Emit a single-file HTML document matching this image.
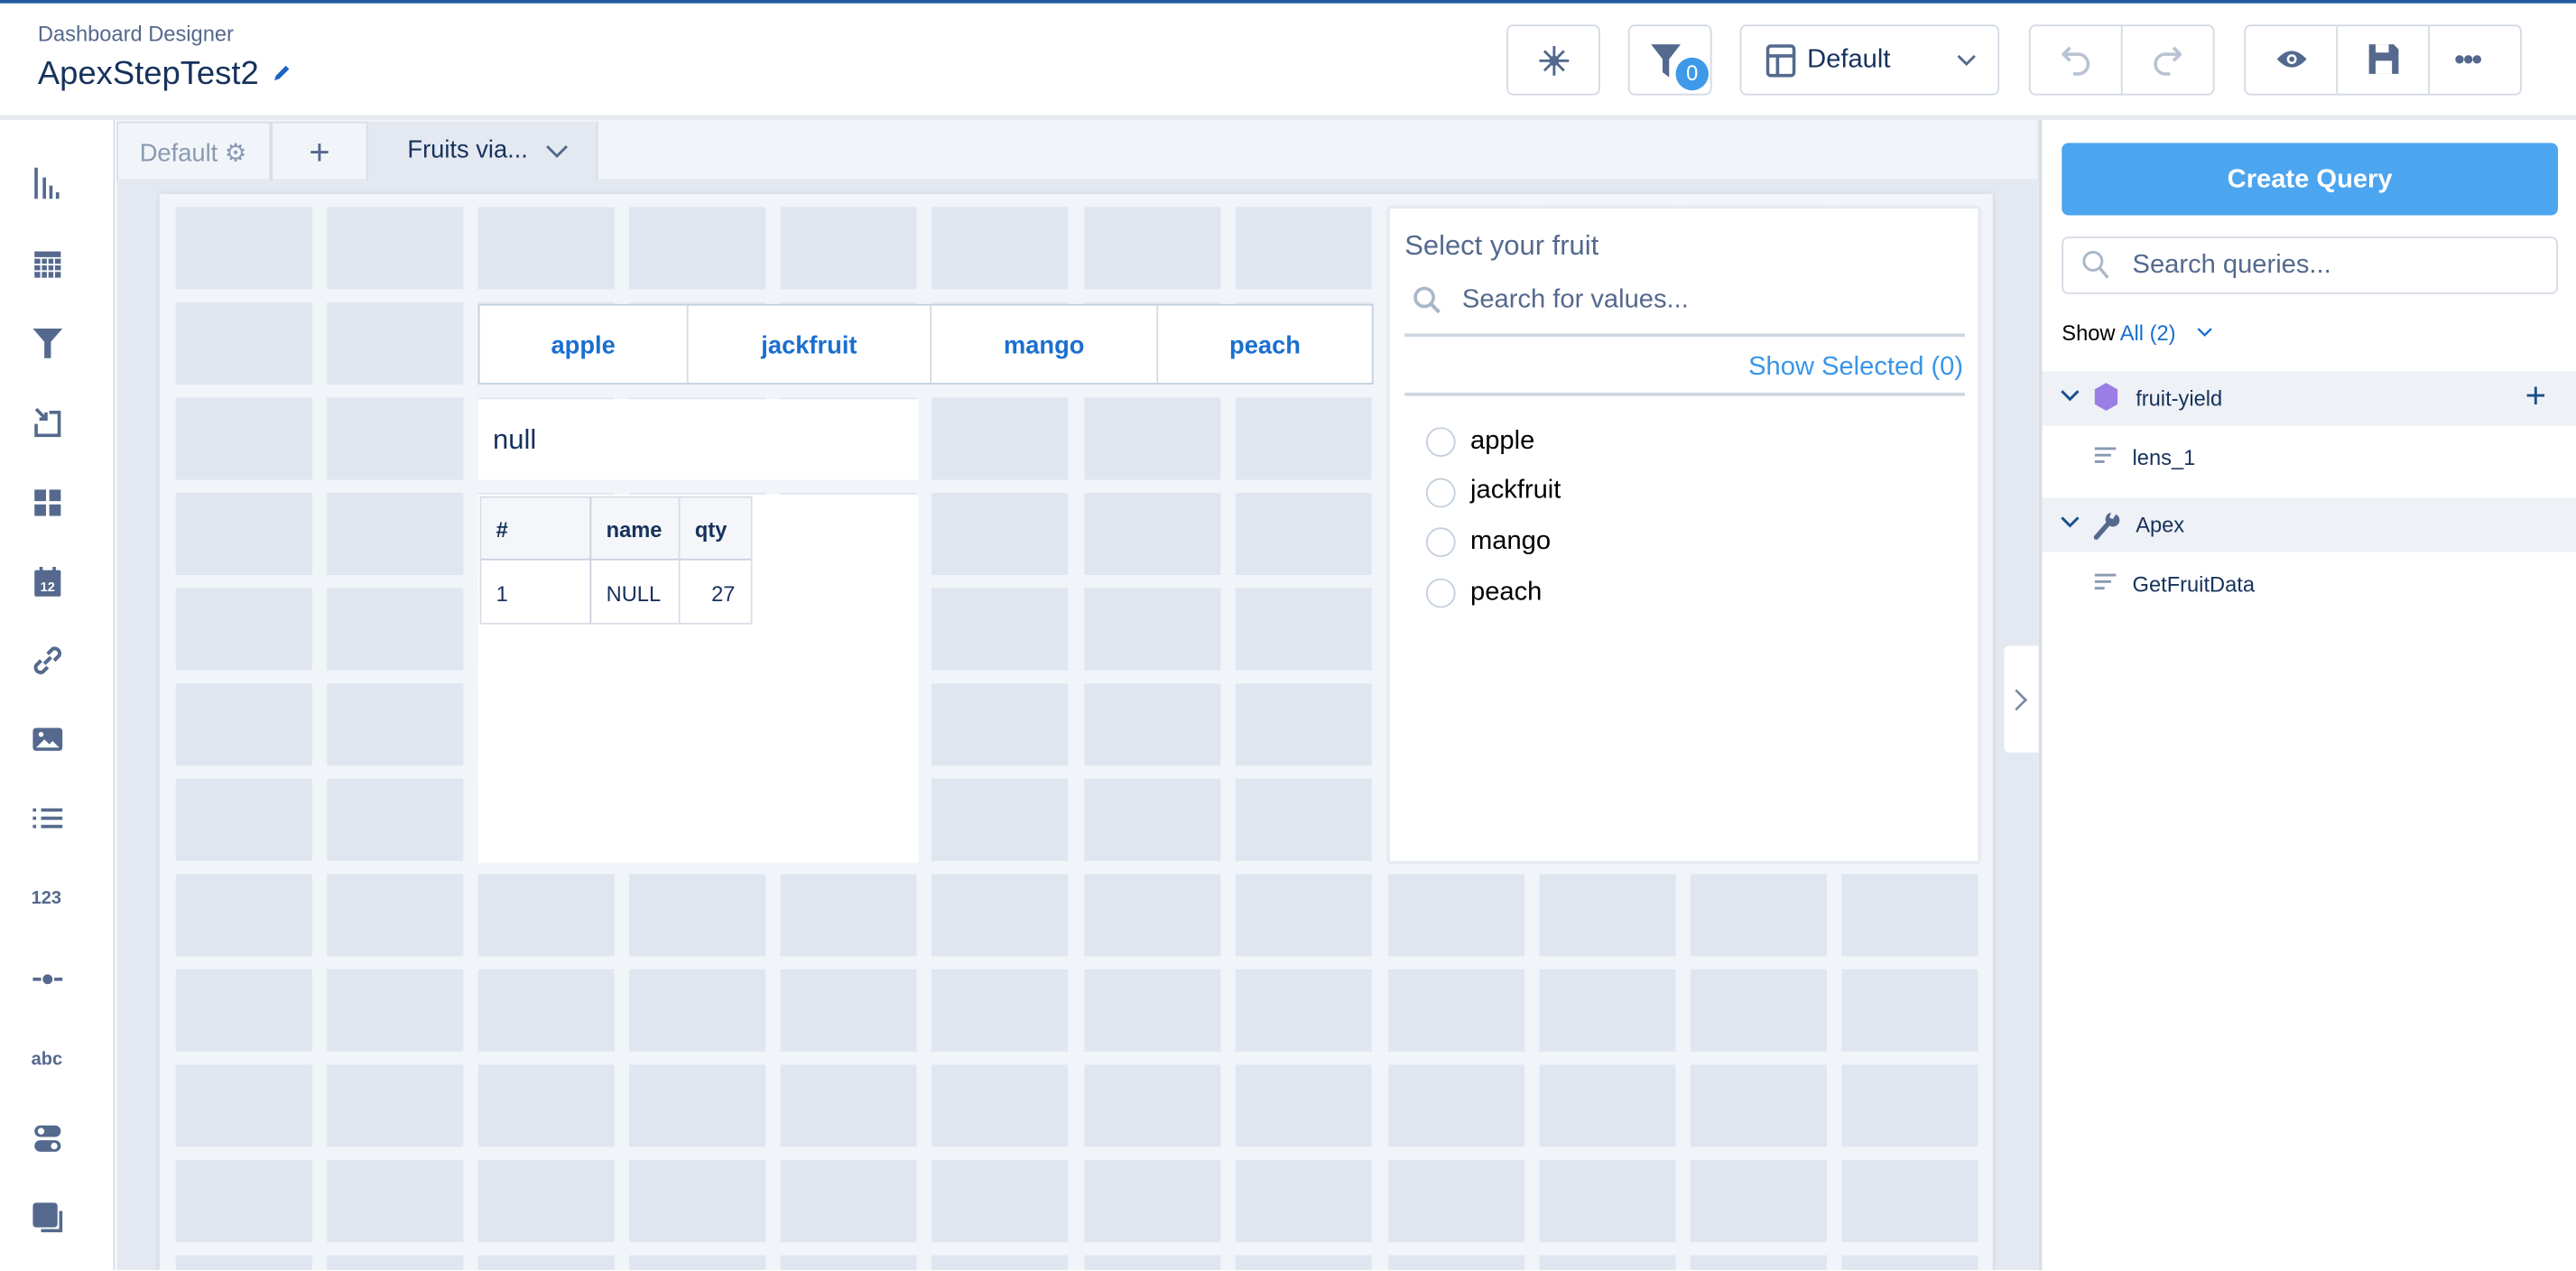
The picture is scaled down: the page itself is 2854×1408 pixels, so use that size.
<!DOCTYPE html>
<html><head><meta charset="utf-8"><style>
*{box-sizing:border-box;margin:0;padding:0}
html,body{width:2854px;height:1408px;overflow:hidden;background:#fff}
#w{position:absolute;left:0;top:0;width:1568px;height:773px;transform:scale(1.82015);transform-origin:0 0;font-family:"Liberation Sans",sans-serif;overflow:hidden}
.a{position:absolute}
.btn{position:absolute;top:15px;height:43px;border:1px solid #d4dae3;border-radius:4px;background:#fff}
.cell{position:absolute;width:83px;height:50px;background:#e0e6f0}
.ic{position:absolute;left:19px;width:20px;height:20px}
</style></head><body><div id="w">
<div class="a" style="left:0;top:0;width:1568px;height:2px;background:#1f5a9c"></div>
<div class="a" style="left:23px;top:13px;font-size:13px;color:#54698d">Dashboard Designer</div>
<div class="a" style="left:23px;top:34px;font-size:20px;color:#16325c">ApexStepTest2</div>
<svg class="a" style="left:165px;top:38px" width="13" height="13" viewBox="0 0 13 13"><path d="M2 11l1-3 6-6 2 2-6 6z" fill="#1b63c5"/></svg>
<div class="btn" style="left:917px;width:57px"><svg class="a" style="left:18px;top:11px" width="20" height="20" viewBox="0 0 20 20"><path d="M10 1v18M1 10h18M4 4l12 12M16 4L4 16" stroke="#54698d" stroke-width="1.6"/><circle cx="10" cy="10" r="3" fill="#54698d"/></svg></div>
<div class="btn" style="left:991px;width:51px"><svg class="a" style="left:12px;top:10px" width="20" height="22" viewBox="0 0 20 22"><path d="M1 1h18l-7 9v11l-4-3v-8z" fill="#54698d"/></svg><div class="a" style="left:28px;top:19px;width:20px;height:20px;border-radius:10px;background:#3e9ae8;color:#fff;font-size:13px;text-align:center;line-height:20px">0</div></div>
<div class="btn" style="left:1059px;width:158px"><svg class="a" style="left:15px;top:11px" width="18" height="20" viewBox="0 0 18 20"><rect x="1" y="1" width="16" height="18" rx="2" fill="none" stroke="#54698d" stroke-width="2"/><path d="M1 7h16M7 7v12" stroke="#54698d" stroke-width="2"/></svg><div class="a" style="left:40px;top:12px;font-size:16px;color:#16325c">Default</div><svg class="a" style="left:131px;top:17px" width="12" height="8" viewBox="0 0 12 8"><path d="M1 1l5 5 5-5" stroke="#54698d" stroke-width="1.6" fill="none"/></svg></div>
<div class="btn" style="left:1235px;width:113px"><div class="a" style="left:55px;top:0;width:1px;height:41px;background:#d4dae3"></div>
<svg class="a" style="left:19px;top:11px" width="18" height="20" viewBox="0 0 18 20"><path d="M5 2L1 6l4 4M1 6h9a6 6 0 010 12H7" stroke="#b8c3d3" stroke-width="2" fill="none"/></svg>
<svg class="a" style="left:74px;top:11px" width="18" height="20" viewBox="0 0 18 20"><path d="M13 2l4 4-4 4M17 6H8a6 6 0 000 12h3" stroke="#b8c3d3" stroke-width="2" fill="none"/></svg></div>
<div class="btn" style="left:1366px;width:169px"><div class="a" style="left:55px;top:0;width:1px;height:41px;background:#d4dae3"></div><div class="a" style="left:111px;top:0;width:1px;height:41px;background:#d4dae3"></div>
<svg class="a" style="left:18px;top:12px" width="20" height="16" viewBox="0 0 20 16"><path d="M1 8q9-10 18 0q-9 10-18 0z" fill="#54698d"/><circle cx="10" cy="8" r="3" fill="#fff"/><circle cx="10" cy="8" r="1.6" fill="#54698d"/></svg>
<svg class="a" style="left:74px;top:10px" width="20" height="20" viewBox="0 0 20 20"><path d="M1 1h15l3 3v15H1z" fill="#54698d"/><rect x="5" y="1" width="8" height="5" fill="#fff"/><rect x="5" y="11" width="10" height="8" fill="#fff"/></svg>
<div class="a" style="left:127px;top:10px;font-size:18px;font-weight:bold;color:#54698d;letter-spacing:-1px">•••</div></div>
<div class="a" style="left:0;top:70px;width:1568px;height:3px;background:#e6eaf0"></div>
<div class="a" style="left:0;top:73px;width:70px;height:701px;background:#fff;border-right:1px solid #d4dae3"></div>
<svg class="ic" style="top:102px" viewBox="0 0 20 20"><path d="M3 0v19M8 6v13M12 11v8M16 15v4" stroke="#54698d" stroke-width="2"/></svg>
<svg class="ic" style="top:151px" viewBox="0 0 20 20"><path d="M2 2h16v16H2z" fill="#54698d"/><path d="M2 6h16M2 10h16M2 14h16M6 6v12M10 6v12M14 6v12" stroke="#fff" stroke-width="1"/></svg>
<svg class="ic" style="top:199px" viewBox="0 0 20 20"><path d="M1 1h18l-7 8v10h-4v-10z" fill="#54698d"/></svg>
<svg class="ic" style="top:247px" viewBox="0 0 20 20"><path d="M3 2l6 6M9 4v4H5" stroke="#54698d" stroke-width="2" fill="none"/><path d="M11 4h6v14H3v-7" stroke="#54698d" stroke-width="2" fill="none"/></svg>
<svg class="ic" style="top:296px" viewBox="0 0 20 20"><rect x="2" y="2" width="7" height="7" fill="#54698d"/><rect x="11" y="2" width="7" height="7" fill="#54698d"/><rect x="2" y="11" width="7" height="7" fill="#54698d"/><rect x="11" y="11" width="7" height="7" fill="#54698d"/></svg>
<svg class="ic" style="top:344px" viewBox="0 0 20 20"><rect x="2" y="3" width="16" height="16" rx="1" fill="#54698d"/><path d="M6 1v4M14 1v4" stroke="#54698d" stroke-width="2"/><text x="10" y="16" font-size="8" fill="#fff" text-anchor="middle" font-family="Liberation Sans" font-weight="bold">12</text></svg>
<svg class="ic" style="top:392px" viewBox="0 0 20 20"><path d="M8 12l4-4M6 10l-3 3a3 3 0 004 4l3-3M14 10l3-3a3 3 0 00-4-4l-3 3" stroke="#54698d" stroke-width="2.2" fill="none"/></svg>
<svg class="ic" style="top:440px" viewBox="0 0 20 20"><rect x="1" y="3" width="18" height="14" rx="2" fill="#54698d"/><circle cx="6" cy="7" r="1.5" fill="#fff"/><path d="M3 15l5-5 3 3 2-2 4 4z" fill="#fff"/></svg>
<svg class="ic" style="top:488px" viewBox="0 0 20 20"><path d="M1 5h2M6 5h13M1 10h2M6 10h13M1 15h2M6 15h13" stroke="#54698d" stroke-width="2"/></svg>
<div class="a" style="left:19px;top:541px;font-size:11px;font-weight:bold;color:#54698d">123</div>
<svg class="ic" style="top:586px" viewBox="0 0 20 20"><path d="M1 10h5M14 10h5" stroke="#54698d" stroke-width="2"/><circle cx="10" cy="10" r="3" fill="#54698d"/></svg>
<div class="a" style="left:19px;top:639px;font-size:11px;font-weight:bold;color:#54698d">abc</div>
<svg class="ic" style="top:683px" viewBox="0 0 20 20"><rect x="2" y="2" width="16" height="7" rx="3.5" fill="#54698d"/><rect x="2" y="11" width="16" height="7" rx="3.5" fill="#54698d"/><circle cx="6" cy="5.5" r="2" fill="#fff"/><circle cx="14" cy="14.5" r="2" fill="#fff"/></svg>
<svg class="ic" style="top:731px" viewBox="0 0 20 20"><rect x="1" y="1" width="15" height="15" rx="2" fill="#54698d"/><path d="M18 6v12H6" stroke="#54698d" stroke-width="2" fill="none"/></svg>
<div class="a" style="left:71px;top:73px;width:1170px;height:701px;background:#e4e9f1"></div>
<div class="a" style="left:71px;top:73px;width:1169px;height:37px;background:#f1f4f9;border-bottom:1px solid #e4e9f1"></div>
<div class="a" style="left:71px;top:74px;width:94px;height:36px;border:1px solid #d8dee7;border-bottom:none;font-size:15px;color:#8a9ab2;padding:9px 0 0 13px">Default ⚙</div>
<div class="a" style="left:165px;top:74px;width:59px;height:36px;border:1px solid #d8dee7;border-bottom:none;font-size:22px;color:#54698d;text-align:center;line-height:35px">+</div>
<div class="a" style="left:224px;top:74px;width:140px;height:36px;background:#e4e9f1;border-right:1px solid #d8dee7;font-size:15px;color:#16325c;padding:9px 0 0 24px">Fruits via...</div>
<svg class="a" style="left:332px;top:88px" width="14" height="9" viewBox="0 0 14 9"><path d="M1 1l6 6 6-6" stroke="#54698d" stroke-width="1.6" fill="none"/></svg>
<div class="a" style="left:97px;top:118px;width:1116px;height:656px;background:#f1f4f9;box-shadow:0 0 3px rgba(0,0,0,.12)"></div>
<div id="cells"></div>
<script>
var h='';var xs=[107,199,291,383,475,567,660,752,845,937,1029,1121];
for(var r=0;r<12;r++)for(var c=0;c<12;c++){var y=126+r*58;var hh=Math.min(50,773-y);if(hh>0)h+='<div class="cell" style="left:'+xs[c]+'px;top:'+y+'px;height:'+hh+'px"></div>';}
document.getElementById('cells').innerHTML=h;
</script>
<div class="a" style="left:291px;top:185px;width:545px;height:49px;background:#fff;border:1px solid #c3cfde;display:flex;font-size:15px;font-weight:bold;color:#1a6fd0">
<div style="width:127px;text-align:center;line-height:49px;border-right:1px solid #d4dae3">apple</div>
<div style="width:148px;text-align:center;line-height:49px;border-right:1px solid #d4dae3">jackfruit</div>
<div style="width:138px;text-align:center;line-height:49px;border-right:1px solid #d4dae3">mango</div>
<div style="flex:1;text-align:center;line-height:49px">peach</div></div>
<div class="a" style="left:291px;top:243px;width:268px;height:49px;background:#fff;font-size:17px;color:#16325c;padding:15px 0 0 9px">null</div>
<div class="a" style="left:291px;top:301px;width:268px;height:224px;background:#fff"></div>
<div class="a" style="left:292px;top:302px;width:166px;height:78px;border:1px solid #d8dde6;font-size:13px;color:#16325c">
<div class="a" style="left:0;top:0;width:164px;height:38px;background:#f4f6f9;border-bottom:1px solid #c9d1dc"></div>
<div class="a" style="left:66px;top:0;width:1px;height:76px;background:#c9d1dc"></div>
<div class="a" style="left:120px;top:0;width:1px;height:76px;background:#d8dde6"></div>
<div class="a" style="left:9px;top:12px;font-weight:bold">#</div><div class="a" style="left:76px;top:12px;font-weight:bold">name</div><div class="a" style="left:130px;top:12px;font-weight:bold">qty</div>
<div class="a" style="left:9px;top:51px">1</div><div class="a" style="left:76px;top:51px">NULL</div><div class="a" style="left:140px;top:51px">27</div></div>
<div class="a" style="left:845px;top:126px;width:360px;height:399px;background:#fff;border:1px solid #e4e9f1;box-shadow:0 0 2px rgba(0,0,0,.1)">
<div class="a" style="left:9px;top:13px;font-size:17px;color:#54698d">Select your fruit</div>
<svg class="a" style="left:14px;top:47px" width="18" height="18" viewBox="0 0 18 18"><circle cx="7" cy="7" r="5.5" stroke="#a8b7c7" stroke-width="2" fill="none"/><path d="M11 11l5 5" stroke="#a8b7c7" stroke-width="2.2"/></svg>
<div class="a" style="left:44px;top:47px;font-size:16px;color:#54698d">Search for values...</div>
<div class="a" style="left:9px;top:76px;width:341px;height:2px;background:#cbd6e2"></div>
<div class="a" style="right:9px;top:88px;font-size:16px;color:#3a95e8">Show Selected (0)</div>
<div class="a" style="left:9px;top:112px;width:341px;height:2px;background:#cbd6e2"></div>
<div class="a" style="left:22px;top:133px;width:18px;height:18px;border:1.5px solid #c3cfdc;border-radius:50%"></div><div class="a" style="left:49px;top:133px;font-size:16px;color:#000">apple</div>
<div class="a" style="left:22px;top:164px;width:18px;height:18px;border:1.5px solid #c3cfdc;border-radius:50%"></div><div class="a" style="left:49px;top:163px;font-size:16px;color:#000">jackfruit</div>
<div class="a" style="left:22px;top:194px;width:18px;height:18px;border:1.5px solid #c3cfdc;border-radius:50%"></div><div class="a" style="left:49px;top:194px;font-size:16px;color:#000">mango</div>
<div class="a" style="left:22px;top:225px;width:18px;height:18px;border:1.5px solid #c3cfdc;border-radius:50%"></div><div class="a" style="left:49px;top:225px;font-size:16px;color:#000">peach</div></div>
<div class="a" style="left:1220px;top:393px;width:21px;height:65px;background:#fff;border-radius:3px 0 0 3px"></div>
<svg class="a" style="left:1226px;top:419px" width="8" height="14" viewBox="0 0 8 14"><path d="M1 1l6 6-6 6" stroke="#7a8ba6" stroke-width="1.5" fill="none"/></svg>
<div class="a" style="left:1241px;top:73px;width:327px;height:701px;background:#fff;border-left:2px solid #d8dee7"></div>
<div class="a" style="left:1255px;top:87px;width:302px;height:44px;background:#4ca5ef;border-radius:4px;color:#fff;font-size:16px;font-weight:bold;text-align:center;line-height:45px">Create Query</div>
<div class="a" style="left:1255px;top:144px;width:302px;height:35px;border:1px solid #d4dae3;border-radius:4px"></div>
<svg class="a" style="left:1267px;top:152px" width="18" height="19" viewBox="0 0 18 19"><circle cx="7" cy="7" r="5.5" stroke="#a8b7c7" stroke-width="1.6" fill="none"/><path d="M11 11l5 6" stroke="#a8b7c7" stroke-width="1.8"/></svg>
<div class="a" style="left:1298px;top:153px;font-size:16px;color:#54698d">Search queries...</div>
<div class="a" style="left:1255px;top:195px;font-size:13px;color:#000">Show <span style="color:#1a6fd0">All (2)</span></div>
<svg class="a" style="left:1337px;top:199px" width="10" height="7" viewBox="0 0 10 7"><path d="M1 1l4 4 4-4" stroke="#1a6fd0" stroke-width="1.3" fill="none"/></svg>
<div class="a" style="left:1243px;top:226px;width:325px;height:33px;background:#eef1f6"></div>
<svg class="a" style="left:1254px;top:237px" width="12" height="8" viewBox="0 0 12 8"><path d="M1 1l5 5 5-5" stroke="#1b4f8a" stroke-width="1.6" fill="none"/></svg>
<svg class="a" style="left:1275px;top:233px" width="14" height="17" viewBox="0 0 14 17"><path d="M7 0l7 4v9l-7 4-7-4V4z" fill="#9a7ee6"/></svg>
<div class="a" style="left:1300px;top:235px;font-size:13px;color:#16325c">fruit-yield</div>
<div class="a" style="left:1537px;top:228px;font-size:22px;color:#1b4f8a">+</div>
<svg class="a" style="left:1275px;top:272px" width="14" height="12" viewBox="0 0 14 12"><path d="M0 1h13M0 5h10M0 9h6" stroke="#8a9ab2" stroke-width="1.6"/></svg>
<div class="a" style="left:1298px;top:271px;font-size:13px;color:#16325c">lens_1</div>
<div class="a" style="left:1243px;top:303px;width:325px;height:33px;background:#eef1f6"></div>
<svg class="a" style="left:1254px;top:314px" width="12" height="8" viewBox="0 0 12 8"><path d="M1 1l5 5 5-5" stroke="#1b4f8a" stroke-width="1.6" fill="none"/></svg>
<svg class="a" style="left:1274px;top:310px" width="17" height="19" viewBox="0 0 17 19"><path d="M2 17l7-8" stroke="#54698d" stroke-width="3" stroke-linecap="round"/><path d="M9 9a4 4 0 105-6l-2 3-2-1 1-3a4 4 0 00-2 7z" fill="#54698d"/></svg>
<div class="a" style="left:1300px;top:312px;font-size:13px;color:#16325c">Apex</div>
<svg class="a" style="left:1275px;top:349px" width="14" height="12" viewBox="0 0 14 12"><path d="M0 1h13M0 5h10M0 9h6" stroke="#8a9ab2" stroke-width="1.6"/></svg>
<div class="a" style="left:1298px;top:348px;font-size:13px;color:#16325c">GetFruitData</div>
</div></body></html>
